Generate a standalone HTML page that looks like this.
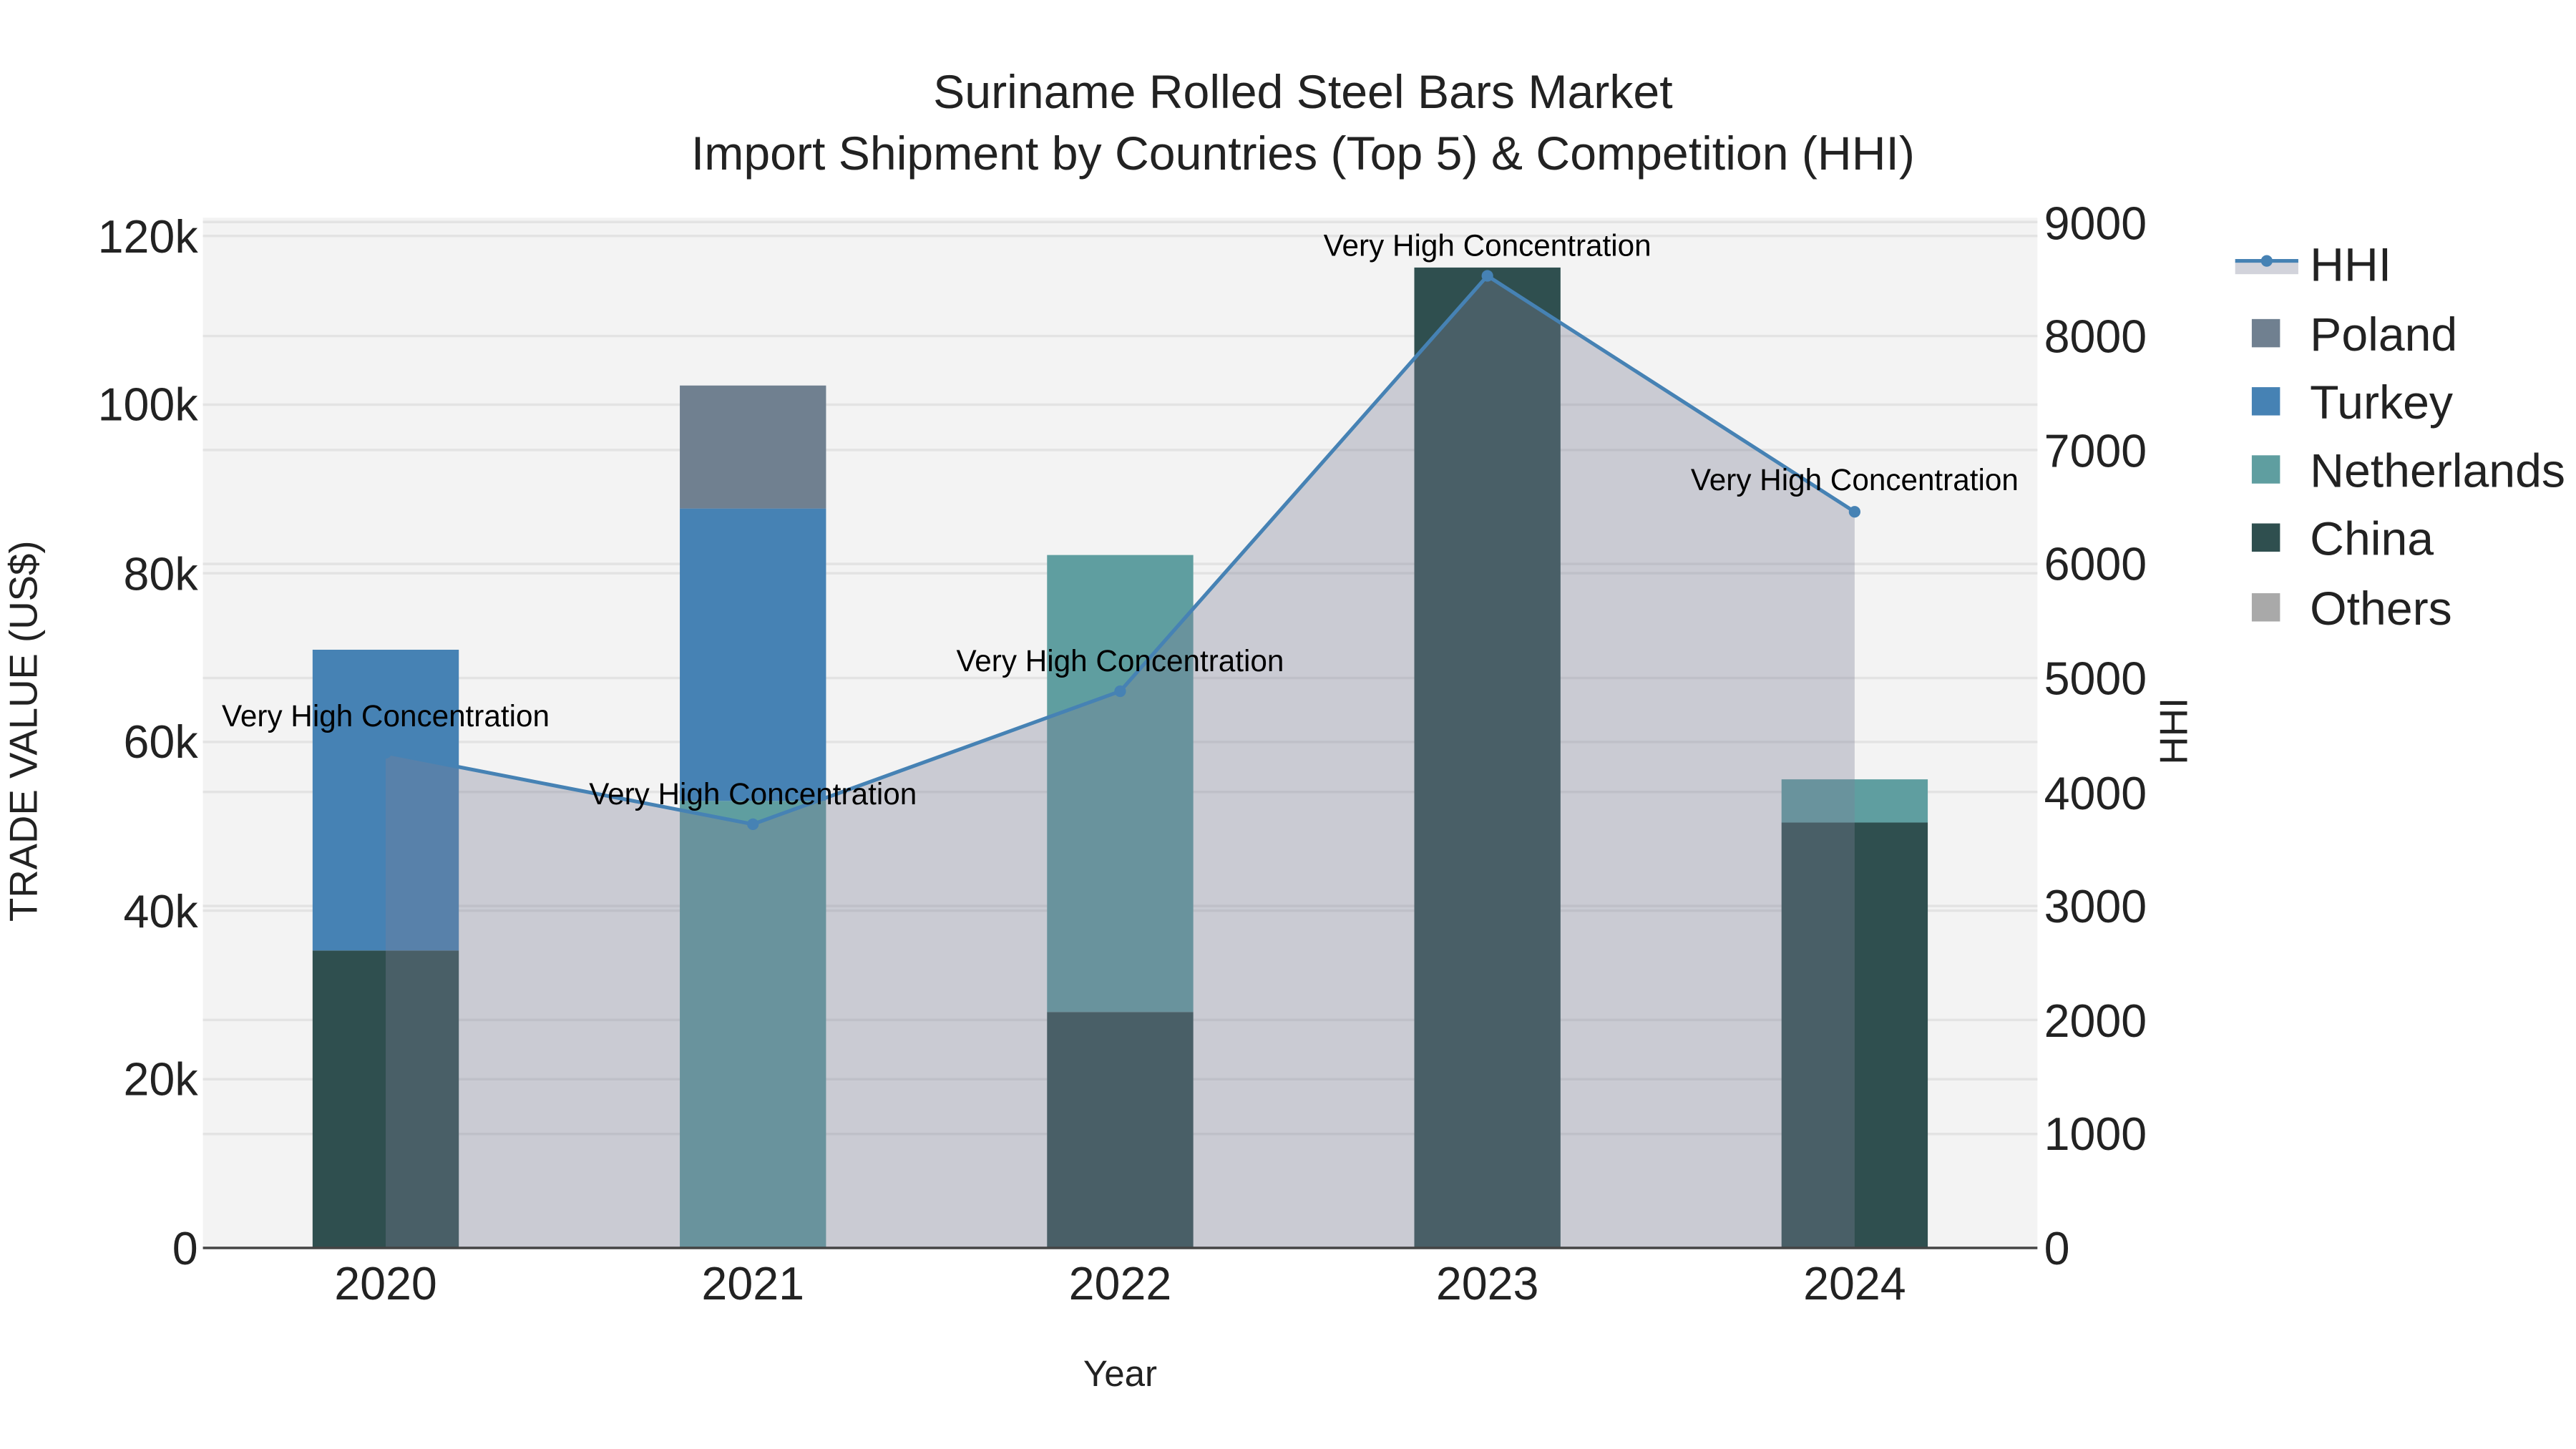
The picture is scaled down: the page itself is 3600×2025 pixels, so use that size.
<!DOCTYPE html>
<html><head><meta charset="utf-8"><style>
html,body{margin:0;padding:0;background:#fff;}
svg{display:block;}
text{font-family:"Liberation Sans",sans-serif;}
</style></head><body>
<svg width="3600" height="2025" viewBox="0 0 1550 872" xmlns="http://www.w3.org/2000/svg">
<rect x="0" y="0" width="1550" height="872" fill="#fff"/>
<rect x="122" y="131" width="1104" height="620" fill="#f3f3f3"/>
<g stroke="#e3e3e3" stroke-width="1.5">
<line x1="122" x2="1226" y1="649.5" y2="649.5"/>
<line x1="122" x2="1226" y1="548" y2="548"/>
<line x1="122" x2="1226" y1="446.5" y2="446.5"/>
<line x1="122" x2="1226" y1="345" y2="345"/>
<line x1="122" x2="1226" y1="243.5" y2="243.5"/>
<line x1="122" x2="1226" y1="142" y2="142"/>
<line x1="122" x2="1226" y1="682.4" y2="682.4"/>
<line x1="122" x2="1226" y1="613.8" y2="613.8"/>
<line x1="122" x2="1226" y1="545.2" y2="545.2"/>
<line x1="122" x2="1226" y1="476.6" y2="476.6"/>
<line x1="122" x2="1226" y1="408" y2="408"/>
<line x1="122" x2="1226" y1="339.4" y2="339.4"/>
<line x1="122" x2="1226" y1="270.8" y2="270.8"/>
<line x1="122" x2="1226" y1="202.2" y2="202.2"/>
<line x1="122" x2="1226" y1="133.6" y2="133.6"/>
</g>
<rect x="188" y="572" width="88" height="179" fill="#2f4f4f"/>
<rect x="188" y="391" width="88" height="181" fill="#4682b4"/>
<rect x="409" y="482" width="88" height="269" fill="#5f9ea0"/>
<rect x="409" y="306" width="88" height="176" fill="#4682b4"/>
<rect x="409" y="232" width="88" height="74" fill="#708090"/>
<rect x="630" y="609" width="88" height="142" fill="#2f4f4f"/>
<rect x="630" y="334" width="88" height="275" fill="#5f9ea0"/>
<rect x="851" y="161" width="88" height="590" fill="#2f4f4f"/>
<rect x="1072" y="495" width="88" height="256" fill="#2f4f4f"/>
<rect x="1072" y="469" width="88" height="26" fill="#5f9ea0"/>
<polygon points="232,453 453,496 674,416 895,166 1116,308 1116,751 232,751" fill="rgba(125,128,151,0.345)"/>
<polyline points="232,453 453,496 674,416 895,166 1116,308" fill="none" stroke="#4682b4" stroke-width="2.2"/>
<g fill="#4682b4"><circle cx="232" cy="453" r="3.5"/><circle cx="453" cy="496" r="3.5"/><circle cx="674" cy="416" r="3.5"/><circle cx="895" cy="166" r="3.5"/><circle cx="1116" cy="308" r="3.5"/></g>
<line x1="122" x2="1226" y1="751" y2="751" stroke="#444" stroke-width="1.5"/>
<g font-size="18.2" text-anchor="middle" fill="#000">
<text x="232" y="437">Very High Concentration</text>
<text x="453" y="484">Very High Concentration</text>
<text x="674" y="404">Very High Concentration</text>
<text x="895" y="154">Very High Concentration</text>
<text x="1116" y="295">Very High Concentration</text>
</g>
<g font-size="28.5" text-anchor="middle" fill="#222">
<text x="784" y="65">Suriname Rolled Steel Bars Market</text>
<text x="784" y="102">Import Shipment by Countries (Top 5) &amp; Competition (HHI)</text>
</g>
<g font-size="27.8" text-anchor="end" fill="#222">
<text x="119" y="761">0</text>
<text x="119" y="659">20k</text>
<text x="119" y="558">40k</text>
<text x="119" y="456">60k</text>
<text x="119" y="355">80k</text>
<text x="119" y="253">100k</text>
<text x="119" y="152">120k</text>
</g>
<g font-size="27.8" text-anchor="start" fill="#222">
<text x="1230" y="761">0</text>
<text x="1230" y="692">1000</text>
<text x="1230" y="624">2000</text>
<text x="1230" y="555">3000</text>
<text x="1230" y="487">4000</text>
<text x="1230" y="418">5000</text>
<text x="1230" y="349">6000</text>
<text x="1230" y="281">7000</text>
<text x="1230" y="212">8000</text>
<text x="1230" y="144">9000</text>
</g>
<g font-size="27.8" text-anchor="middle" fill="#222">
<text x="232" y="782">2020</text>
<text x="453" y="782">2021</text>
<text x="674" y="782">2022</text>
<text x="895" y="782">2023</text>
<text x="1116" y="782">2024</text>
</g>
<text x="674" y="834" font-size="22" text-anchor="middle" fill="#222">Year</text>
<text transform="translate(22,440) rotate(-90)" font-size="23.5" text-anchor="middle" fill="#222">TRADE VALUE (US$)</text>
<text transform="translate(1316,440) rotate(-90)" font-size="23.5" text-anchor="middle" fill="#222">HHI</text>
<rect x="1345" y="157" width="38" height="8" fill="rgba(125,128,151,0.345)"/>
<line x1="1345" x2="1383" y1="157" y2="157" stroke="#4682b4" stroke-width="2.2"/>
<circle cx="1364" cy="157" r="3.5" fill="#4682b4"/>
<rect x="1355" y="192" width="17" height="17" fill="#708090"/>
<rect x="1355" y="233" width="17" height="17" fill="#4682b4"/>
<rect x="1355" y="274" width="17" height="17" fill="#5f9ea0"/>
<rect x="1355" y="315" width="17" height="17" fill="#2f4f4f"/>
<rect x="1355" y="357" width="17" height="17" fill="#a9a9a9"/>
<g font-size="28.5" fill="#222">
<text x="1390" y="169">HHI</text>
<text x="1390" y="211">Poland</text>
<text x="1390" y="252">Turkey</text>
<text x="1390" y="293">Netherlands</text>
<text x="1390" y="334">China</text>
<text x="1390" y="376">Others</text>
</g>
</svg>
</body></html>
